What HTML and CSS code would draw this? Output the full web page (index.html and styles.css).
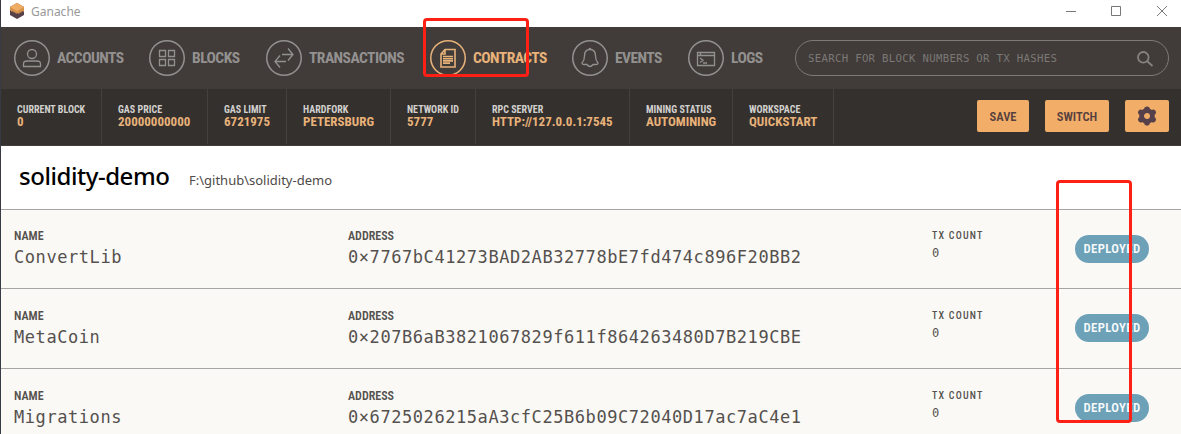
FILE: index.html
```
<!DOCTYPE html>
<html lang="en">
<head>
<meta charset="utf-8">
<title>Ganache</title>
<link rel="stylesheet" href="styles.css">
</head>
<body>
<div class="window">
  <header class="titlebar">
    <svg class="logo" width="16" height="18" viewBox="0 0 16 18"><path d="M8 1l7 4v8l-7 4-7-4V5z" fill="#56404a"/><path d="M8 1l7 4v4l-1 1-1-1-1 2-1-1-1 2-2-1-1 1-1-2-1 1-1-2-1 1-2-2V5z" fill="#d8934b"/><path d="M8 1l7 4-7 4-7-4z" fill="#f0ad66"/></svg>
    <span class="app-name">Ganache</span>
    <svg class="controls" width="102" height="12" viewBox="0 0 102 12" fill="none" stroke="#777"><path d="M0 5.500h10M45.500 .5h9v9h-9zM91 0l10 10M101 0L91 10"/></svg>
  </header>
  <nav class="nav">
    <a class="item accounts"><i class="circle"><svg viewBox="0 0 36 36"><circle cx="18" cy="14" r="4.500"/><path d="M9.500 26.500v-2.500q0-3 3.500-3h10q3.500 0 3.500 3v2.500z"/></svg></i><span class="label">ACCOUNTS</span></a>
    <a class="item blocks"><i class="circle"><svg viewBox="0 0 36 36"><path d="M10.500 10.500h6v6h-6zM19.500 10.500h6v6h-6zM10.500 19.500h6v6h-6zM19.500 19.500h6v6h-6z"/></svg></i><span class="label">BLOCKS</span></a>
    <a class="item transactions"><i class="circle"><svg viewBox="0 0 36 36"><path d="M16 14.500h11M22 8.500l5 6-5 6M20 21.500H9M14 15.500l-5 6 5 6"/></svg></i><span class="label">TRANSACTIONS</span></a>
    <a class="item contracts active"><i class="circle"><svg viewBox="0 0 36 36"><path stroke-width="1.600" d="M15 9.500h10v17.500H11V14zM15 9.500V14h-4M13 16.500h10M13 18.700h10M13 20.900h10M13 23.100h7"/></svg></i><span class="label">CONTRACTS</span></a>
    <a class="item events"><i class="circle"><svg viewBox="0 0 36 36"><path d="M18 9.500c-4 0-5.500 3-5.500 6.500 0 4-.5 5-2.500 7 0 1.500 1 1.500 5 1.500q3 4 6 0c4 0 5 0 5-1.500-2-2-2.500-3-2.500-7 0-3.500-1.500-6.500-5.500-6.500zM17 9q1-1 2 0"/></svg></i><span class="label">EVENTS</span></a>
    <a class="item logs"><i class="circle"><svg viewBox="0 0 36 36"><path d="M9.500 12.500h17v13h-17zM9.500 15.500h17M12.500 12.500v3M12 18l3 2.300-3 2.200M15 23h4"/></svg></i><span class="label">LOGS</span></a>
    <div class="search"><span class="search-text">SEARCH FOR BLOCK NUMBERS OR TX HASHES</span><svg class="lens" width="18" height="18" viewBox="0 0 18 18"><circle cx="7.300" cy="7.300" r="5.300"/><path d="M11 11l5.500 5"/></svg></div>
  </nav>
  <section class="info">
    <div class="stat block-no"><b>CURRENT BLOCK</b><strong>0</strong></div>
    <div class="stat gas-price"><b>GAS PRICE</b><strong>20000000000</strong></div>
    <div class="stat gas-limit"><b>GAS LIMIT</b><strong>6721975</strong></div>
    <div class="stat hardfork"><b>HARDFORK</b><strong>PETERSBURG</strong></div>
    <div class="stat network"><b>NETWORK ID</b><strong>5777</strong></div>
    <div class="stat rpc"><b>RPC SERVER</b><strong>HTTP://127.0.0.1:7545</strong></div>
    <div class="stat mining"><b>MINING STATUS</b><strong>AUTOMINING</strong></div>
    <div class="stat workspace"><b>WORKSPACE</b><strong>QUICKSTART</strong></div>
    <div class="actions">
      <button class="btn save"><span>SAVE</span></button>
      <button class="btn switch"><span>SWITCH</span></button>
      <button class="btn gear"><svg width="20" height="20" viewBox="0 0 20 20"><circle cx="10" cy="10" r="5.400" fill="none" stroke="#56404a" stroke-width="4.800"/><path stroke="#56404a" stroke-width="5.600" stroke-linecap="round" d="M10 3.300v.5M10 16.200v.5M3.900 6.400l.3.200M16.100 6.400l-.3.200M3.900 13.600l.3-.2M16.100 13.600l-.3-.2"/></svg></button>
    </div>
  </section>
  <section class="project"><h1>solidity-demo</h1><span class="path">F:\github\solidity-demo</span></section>
  <main class="rows">
    <article class="row first"><div class="name"><h2>NAME</h2><p>ConvertLib</p></div><div class="address"><h2>ADDRESS</h2><p>0×7767bC41273BAD2AB32778bE7fd474c896F20BB2</p></div><div class="count"><h3>TX COUNT</h3><p>0</p></div><div class="badge"><span>DEPLOYED</span></div></article>
    <article class="row"><div class="name"><h2>NAME</h2><p>MetaCoin</p></div><div class="address"><h2>ADDRESS</h2><p>0×207B6aB3821067829f611f864263480D7B219CBE</p></div><div class="count"><h3>TX COUNT</h3><p>0</p></div><div class="badge"><span>DEPLOYED</span></div></article>
    <article class="row"><div class="name"><h2>NAME</h2><p>Migrations</p></div><div class="address"><h2>ADDRESS</h2><p>0×6725026215aA3cfC25B6b09C72040D17ac7aC4e1</p></div><div class="count"><h3>TX COUNT</h3><p>0</p></div><div class="badge"><span>DEPLOYED</span></div></article>
  </main>
  <div class="mark mark-contracts"></div>
  <div class="mark mark-status"></div>
</div>
</body>
</html>
```
FILE: styles.css
```
* { box-sizing: border-box; }
body { margin: 0; overflow: hidden; background: #fff; }
h1, h2, h3, p { margin: 0; }
.window { position: relative; width: 1181px; height: 434px; overflow: hidden; border-left: 1px solid #393b44; font-family: Roboto, sans-serif; font-stretch: 75%; }
.titlebar { display: flex; height: 27px; padding: 2px 13px 0 8px; background: #fff; }
.logo { flex: none; }
.app-name { margin-left: 6px; font: 12px/19px "Noto Sans", sans-serif; color: #999; }
.controls { margin: 4px 0 0 auto; }
.nav { display: flex; height: 62px; padding: 13px 12px 0 13px; background: #413c39; color: #939190; }
.item { display: flex; flex: none; gap: 7px; height: 36px; }
.circle { flex: none; width: 36px; height: 36px; border-radius: 50%; box-shadow: inset 0 0 0 1.500px currentColor; }
.circle svg { display: block; width: 36px; height: 36px; fill: none; stroke: currentColor; stroke-width: 1.300; }
.label { font-size: 15.500px; font-weight: 700; line-height: 36px; letter-spacing: -.54px; white-space: nowrap; }
.accounts { width: 135px; }
.blocks { width: 117px; }
.transactions { width: 164px; }
.contracts { width: 142px; }
.events { width: 116px; }
.logs { width: 107px; }
.active { color: #e8b27a; }
.search { display: flex; justify-content: space-between; width: 374px; height: 36px; padding: 0 14px 0 12px; border: 1px solid #7d7a78; border-radius: 18px; }
.search-text { font: 10.700px/36px "DejaVu Sans Mono", monospace; letter-spacing: .3px; color: #7b7876; white-space: nowrap; }
.lens { margin-top: 9px; fill: none; stroke: #858280; stroke-width: 1.800; }
.info { display: flex; height: 57px; background: #34302d; border-bottom: 1px solid #413c3c; }
.stat { flex: none; height: 55px; padding: 15px 0 0 16px; border-right: 1px solid #45403d; white-space: nowrap; }
.stat b { display: block; font-size: 10px; line-height: 11px; color: #d2d0ce; }
.stat strong { display: block; font-size: 13px; line-height: 13px; color: #e8b27a; }
.block-no { width: 101px; }
.gas-price { width: 106px; }
.gas-limit { width: 79px; }
.hardfork { width: 104px; }
.network { width: 85px; }
.rpc { width: 154px; }
.mining { width: 103px; }
.workspace { width: 101px; }
.actions { display: flex; gap: 16px; margin: 11px 12px 0 auto; }
.btn { display: flex; align-items: center; justify-content: center; height: 32px; padding: 0; border: 0; border-radius: 2px; background: #f2ae68; color: #56403f; font: 600 12.500px Roboto, sans-serif; font-stretch: 75%; }
.save { width: 52px; }
.switch { width: 64px; }
.gear { width: 44px; }
.project { display: flex; align-items: baseline; height: 63px; padding: 14px 0 0 18px; background: #fff; }
.project h1 { width: 170px; font: 550 24px/32px "Noto Sans", sans-serif; letter-spacing: -.45px; color: #000; white-space: nowrap; }
.path { font: 13px "Noto Sans", sans-serif; color: #4e4a48; }
.row { display: flex; height: 80px; padding: 20px 0 0 13px; background: #faf9f6; border-top: 1px solid #a5a4a4; color: #55514e; }
.first { height: 79px; padding-top: 19px; }
.row h2 { font-size: 12px; font-weight: 600; line-height: 14px; color: #55514e; }
.row p { font: 17px/28px "DejaVu Sans Mono", monospace; letter-spacing: .565px; white-space: nowrap; }
.name { width: 334px; }
.address { width: 584px; }
.count { width: 143px; }
.row h3 { font-size: 10px; font-weight: 500; line-height: 14px; letter-spacing: 1.200px; color: #55514e; }
.row .count p { font-size: 12px; line-height: 20px; }
.badge { width: 74px; height: 28px; margin-top: 5px; border-radius: 14px; background: #6ca1b7; color: #f7fafb; text-align: center; font-size: 12.700px; font-weight: 600; line-height: 28px; letter-spacing: .4px; }
.first .badge { margin-top: 6px; }
.mark { position: absolute; border: 3px solid #ff2015; border-radius: 4px; }
.mark-contracts { left: 422px; top: 18px; width: 106px; height: 59px; }
.mark-status { left: 1055px; top: 180px; width: 76px; height: 243px; }
```
